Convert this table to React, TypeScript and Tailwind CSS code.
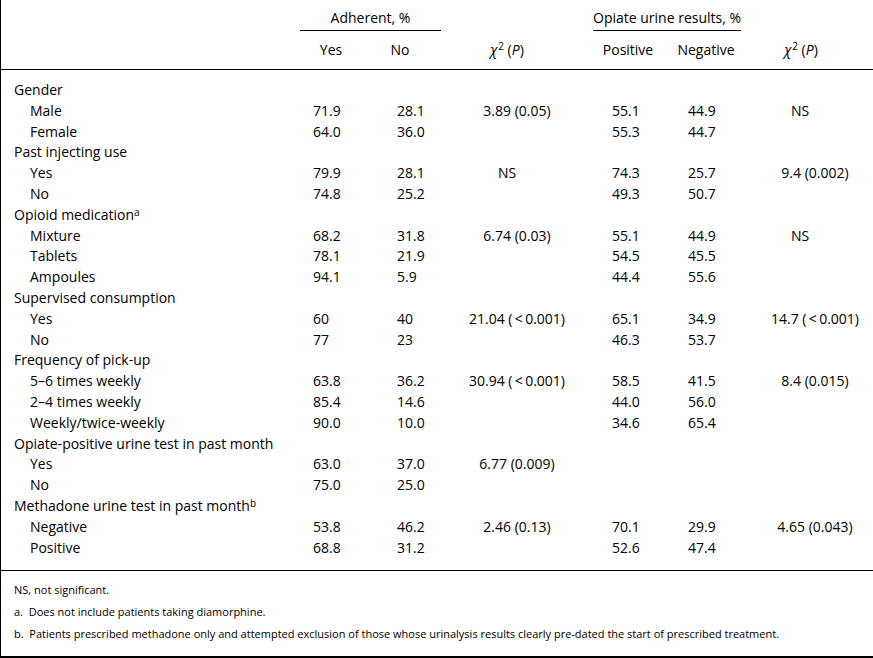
import type { ReactNode } from "react";

type Row = [string, string, string, ReactNode, string, string, ReactNode];

interface Group {
  title: ReactNode;
  rows: Row[];
}

const lt = "(\u2009<\u20090.001)";

const groups: Group[] = [
  {
    title: "Gender",
    rows: [
      ["Male", "71.9", "28.1", "3.89 (0.05)", "55.1", "44.9", "NS"],
      ["Female", "64.0", "36.0", "", "55.3", "44.7", ""],
    ],
  },
  {
    title: "Past injecting use",
    rows: [
      ["Yes", "79.9", "28.1", "NS", "74.3", "25.7", "9.4 (0.002)"],
      ["No", "74.8", "25.2", "", "49.3", "50.7", ""],
    ],
  },
  {
    title: (
      <>
        Opioid medication<sup className="text-[10px] top-[-0.4em]">a</sup>
      </>
    ),
    rows: [
      ["Mixture", "68.2", "31.8", "6.74 (0.03)", "55.1", "44.9", "NS"],
      ["Tablets", "78.1", "21.9", "", "54.5", "45.5", ""],
      ["Ampoules", "94.1", "5.9", "", "44.4", "55.6", ""],
    ],
  },
  {
    title: "Supervised consumption",
    rows: [
      ["Yes", "60", "40", `21.04 ${lt}`, "65.1", "34.9", `14.7 ${lt}`],
      ["No", "77", "23", "", "46.3", "53.7", ""],
    ],
  },
  {
    title: "Frequency of pick-up",
    rows: [
      ["5\u20136 times weekly", "63.8", "36.2", `30.94 ${lt}`, "58.5", "41.5", "8.4 (0.015)"],
      ["2\u20134 times weekly", "85.4", "14.6", "", "44.0", "56.0", ""],
      ["Weekly/twice-weekly", "90.0", "10.0", "", "34.6", "65.4", ""],
    ],
  },
  {
    title: "Opiate-positive urine test in past month",
    rows: [
      ["Yes", "63.0", "37.0", "6.77 (0.009)", "", "", ""],
      ["No", "75.0", "25.0", "", "", "", ""],
    ],
  },
  {
    title: (
      <>
        Methadone urine test in past month<sup className="text-[10px] top-[-0.4em]">b</sup>
      </>
    ),
    rows: [
      ["Negative", "53.8", "46.2", "2.46 (0.13)", "70.1", "29.9", "4.65 (0.043)"],
      ["Positive", "68.8", "31.2", "", "52.6", "47.4", ""],
    ],
  },
];

const cols = "grid grid-cols-[299px_70px_71px_152px_74px_74px_132px]";

function Chi() {
  return (
    <span>
      <span className="italic">χ</span>
      <sup className="text-[10px] top-[-0.5em] ml-[1px]">2</sup> (<span className="italic">P</span>)
    </span>
  );
}

export default function App() {
  return (
    <div
      className="w-[873px] h-[658px] bg-white text-black border-l border-b-2 border-black flex flex-col"
      style={{ fontFamily: '"Open Sans", "Noto Sans", sans-serif' }}
    >
      {/* header */}
      <div className="border-b border-black text-[14px] leading-[20px] whitespace-nowrap">
        <div className={cols}>
          <div />
          <div className="col-span-2 h-[31px] pt-[8px] text-center border-b border-black">Adherent, %</div>
          <div />
          <div className="col-span-2 h-[31px] pt-[8px] text-center border-b border-black">Opiate urine results, %</div>
          <div />
        </div>
        <div className={cols + " h-[38px] pt-[9px]"}>
          <div />
          <div className="text-center pr-[8px]">Yes</div>
          <div className="text-center pr-[11px]">No</div>
          <div className="text-center pr-[20px]">
            <Chi />
          </div>
          <div className="text-center pr-[4px]">Positive</div>
          <div className="text-center pl-[4px]">Negative</div>
          <div className="text-center pr-[12px]">
            <Chi />
          </div>
        </div>
      </div>

      {/* body */}
      <div className="border-b border-black pt-[10px] pb-[12px] text-[14px] leading-[20.8px] whitespace-nowrap">
        {groups.map((g, gi) => (
          <div key={gi}>
            <div className="pl-[13px]">{g.title}</div>
            {g.rows.map((r, ri) => (
              <div key={ri} className={cols}>
                <div className="pl-[29px]">{r[0]}</div>
                <div className="pl-[13px]">{r[1]}</div>
                <div className="pl-[27px]">{r[2]}</div>
                <div className={r[3] === "NS" ? "text-center pr-[20px]" : "text-center"}>{r[3]}</div>
                <div className="pl-[19px]">{r[4]}</div>
                <div className="pl-[21px]">{r[5]}</div>
                <div className={r[6] === "NS" ? "text-center pr-[14px]" : "text-center pl-[16px]"}>{r[6]}</div>
              </div>
            ))}
          </div>
        ))}
      </div>

      {/* footnotes */}
      <div className="pl-[13px] pt-[11px] text-[11px] leading-[16px] flex flex-col gap-[6px]">
        <div>NS, not significant.</div>
        <div>a.&nbsp; Does not include patients taking diamorphine.</div>
        <div>
          b.&nbsp; Patients prescribed methadone only and attempted exclusion of those whose urinalysis results clearly
          pre-dated the start of prescribed treatment.
        </div>
      </div>
    </div>
  );
}
